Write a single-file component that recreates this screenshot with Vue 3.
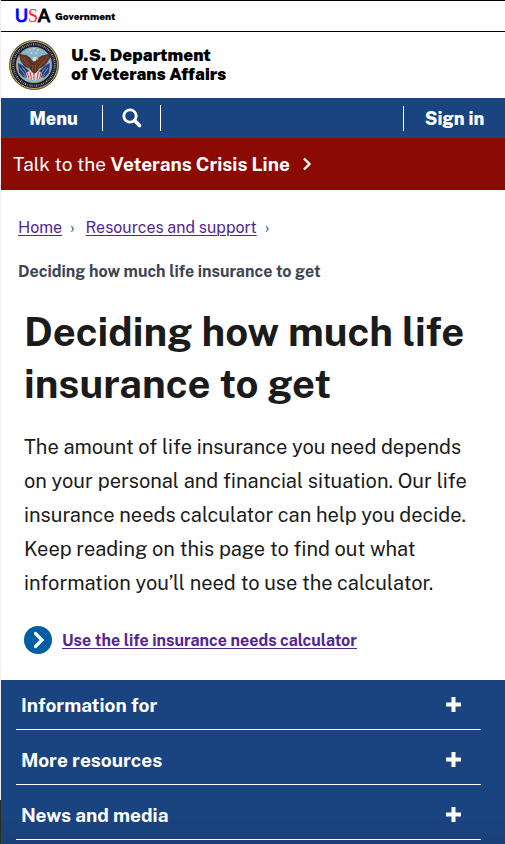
<script setup>
import { ref } from 'vue'

const crumbs = ['Home', 'Resources and support']
const sections = ref([
  { title: 'Information for', open: false },
  { title: 'More resources', open: false },
  { title: 'News and media', open: false },
])
const stars = [[42, 20], [50, 17], [58, 20], [45, 26], [54, 26]]
</script>

<template>
  <div class="page">
    <header>
      <div class="gov"><span class="usa"><span class="u">U</span><span class="s">S</span>A</span> <span class="label">Government</span></div>
      <a class="brand" href="#">
        <svg class="seal" viewBox="0 0 100 100" aria-hidden="true">
          <circle cx="50" cy="50" r="49" fill="#141d40" stroke="#6f6234" stroke-width="2" />
          <circle cx="50" cy="50" r="47" fill="none" stroke="#d3b350" stroke-width="2" />
          <circle cx="50" cy="50" r="41.500" fill="none" stroke="#a99d6c" stroke-width="4" stroke-dasharray="1.300 2 2.200 2 1.200 2.400" />
          <circle cx="50" cy="50" r="35.500" fill="#83b6d2" stroke="#c0a052" stroke-width="1.600" />
          <circle v-for="(s, i) in stars" :key="i" :cx="s[0]" :cy="s[1]" r="1.800" fill="#f1d76e" />
          <path d="M18 46L28 51L40 62L36 76L28 74L20 65Z" fill="#2a3f7c" />
          <path d="M82 46L72 51L60 62L64 76L72 74L80 65Z" fill="#2a3f7c" />
          <path d="M22 56L33 71M27 55L38 69M78 56L67 71M73 55L62 69" stroke="#aab9d6" stroke-width="1.300" />
          <path d="M34 67L43 60L50 66L57 60L66 67L63 77L51 81L37 77Z" fill="#e9dcdf" />
          <path d="M37 66L40 78M42 63L45 79M64 66L61 78M59 63L56 79M50 67V80" stroke="#bc4148" stroke-width="2" />
          <path d="M19 25L26 29L35 30L42 35L48 43L53 42L58 36L66 31L75 29L83 26L82 36L76 46L68 54L60 57L56 64L50 68L45 63L41 57L31 53L23 42Z" fill="#603320" />
          <path d="M24 33L38 49M30 34L43 52M26 42L41 55M78 32L63 49M74 40L59 55M68 35L56 49M47 50V61M53 50V61" stroke="#8d5532" stroke-width="1.500" />
          <path d="M47 39L50 34L54 34L57 37L53 39L52 43Z" fill="#efe5d3" />
          <path d="M54 35L60 38L56 40Z" fill="#dba92d" />
          <path d="M29 71L39 77L50 73L61 78L71 71M39 77L36 82M61 78L65 82" fill="none" stroke="#c9bd8a" stroke-width="1.400" />
        </svg>
        <span>U.S. Department<br>of Veterans Affairs</span>
      </a>
      <nav class="bar">
        <button class="menu">Menu</button>
        <button class="search" aria-label="Search">
          <svg viewBox="0 0 20 20" width="20" height="20"><circle cx="8" cy="8" r="6.200" fill="none" stroke="#fff" stroke-width="2.800" /><path d="M12.500 12.500L17.500 17.500" stroke="#fff" stroke-width="3.600" stroke-linecap="round" /></svg>
        </button>
        <button class="signin">Sign in</button>
      </nav>
      <button class="crisis">
        <span>Talk to the <b>Veterans Crisis Line</b></span>
        <svg viewBox="0 0 10 14" width="10" height="14"><path d="M2 1.500L7.500 7L2 12.500" fill="none" stroke="#fff" stroke-width="2.400" /></svg>
      </button>
    </header>

    <nav class="crumbs" aria-label="Breadcrumb">
      <ol>
        <li v-for="c in crumbs" :key="c"><a href="#">{{ c }}</a><span class="sep">›</span></li>
        <li class="current">Deciding how much life insurance to get</li>
      </ol>
    </nav>

    <main>
      <h1>Deciding how much life insurance to get</h1>
      <p>The amount of life insurance you need depends on your personal and financial situation. Our life insurance needs calculator can help you decide. Keep reading on this page to find out what information you’ll need to use the calculator.</p>
      <a class="action" href="#">
        <svg viewBox="0 0 28 28" width="28" height="28"><circle cx="14" cy="14" r="14" fill="#005ea2" /><path d="M11.500 7.500L18 14L11.500 20.500" fill="none" stroke="#fff" stroke-width="3.200" stroke-linecap="round" /></svg>
        <span>Use the life insurance needs calculator</span>
      </a>
    </main>

    <footer>
      <button v-for="s in sections" :key="s.title" :aria-expanded="s.open" @click="s.open = !s.open">
        <span>{{ s.title }}</span>
        <svg viewBox="0 0 15 15" width="15" height="15"><path d="M7.500 0V15M0 7.500H15" stroke="#fff" stroke-width="4" /></svg>
      </button>
    </footer>
  </div>
</template>

<style>
body {
  background: #fff;
}
</style>

<style scoped>
.page {
  box-sizing: border-box;
  padding-left: 1px;
  background: linear-gradient(to top, #29301f 44px, #f0ecf4 44px);
  font-family: "Public Sans", Roboto, "Liberation Sans", sans-serif;
  color: #1b1b1b;
}
header, main, .crumbs {
  background: #fff;
}
button {
  border: 0;
  padding: 0;
  background: none;
  color: #fff;
  font: inherit;
  cursor: pointer;
}
svg {
  display: block;
  flex: none;
}
.gov {
  display: flex;
  align-items: center;
  gap: 5px;
  height: 30px;
  padding-left: 14px;
  border-top: 1px solid #000;
  border-bottom: 1px solid #000;
  color: #000;
}
.usa {
  font-family: "Liberation Sans", sans-serif;
  font-size: 18px;
  line-height: 20px;
  -webkit-text-stroke: 1px currentColor;
}
.u {
  color: #00f;
}
.s {
  color: #f22;
  font-family: "Liberation Serif", serif;
  -webkit-text-stroke: 0;
}
.label {
  font-size: 10px;
  font-weight: 900;
}
.brand {
  display: flex;
  align-items: center;
  gap: 12px;
  height: 66px;
  padding-left: 8px;
  color: #000;
  font-size: 17px;
  font-weight: 900;
  line-height: 19px;
  text-decoration: none;
}
.seal {
  width: 50px;
  height: 50px;
}
.bar {
  display: flex;
  align-items: center;
  height: 40px;
  background: #1a4480;
  font-weight: 800;
}
.menu {
  width: 102px;
  height: 26px;
  padding-left: 4px;
  border-right: 1px solid #fff;
  font-size: 18px;
}
.search {
  display: flex;
  align-items: center;
  justify-content: center;
  width: 58px;
  height: 26px;
  border-right: 1px solid #fff;
}
.signin {
  width: 102px;
  height: 25px;
  margin-left: auto;
  border-left: 1px solid #fff;
  font-size: 18px;
}
.crisis {
  display: flex;
  align-items: center;
  gap: 12px;
  width: 100%;
  height: 52px;
  padding-left: 12px;
  background: #8b0a03;
  font-size: 19px;
}
.crumbs {
  padding: 25px 17px 0;
  font-size: 16px;
}
.crumbs ol {
  display: flex;
  flex-wrap: wrap;
  margin: 0;
  padding: 0;
  list-style: none;
  line-height: 26px;
}
.crumbs a, .action {
  color: #54278f;
  text-decoration-thickness: 1px;
  text-underline-offset: 2px;
}
.sep {
  margin: 0 11px 0 8px;
  color: #005ea2;
}
.crumbs .current {
  flex-basis: 100%;
  margin-top: 18px;
  color: #3d4551;
  font-weight: 700;
}
main {
  padding: 21px 23px 26px;
}
h1 {
  margin: 0;
  font-size: 40px;
  font-weight: 700;
  line-height: 52px;
}
p {
  margin: 20px 0 26px;
  font-size: 20px;
  line-height: 34px;
}
.action {
  display: flex;
  align-items: center;
  gap: 10px;
  font-size: 16px;
  font-weight: 700;
}
footer {
  display: grid;
  gap: 5px;
  padding: 0 24px 4px 15px;
  background: linear-gradient(to top, #193f77, #1a4480 28px);
}
footer button {
  display: flex;
  align-items: center;
  justify-content: space-between;
  height: 50px;
  padding: 0 20px 0 5px;
  border-bottom: 1px solid #fff;
  font-size: 19px;
  font-weight: 700;
}
</style>
